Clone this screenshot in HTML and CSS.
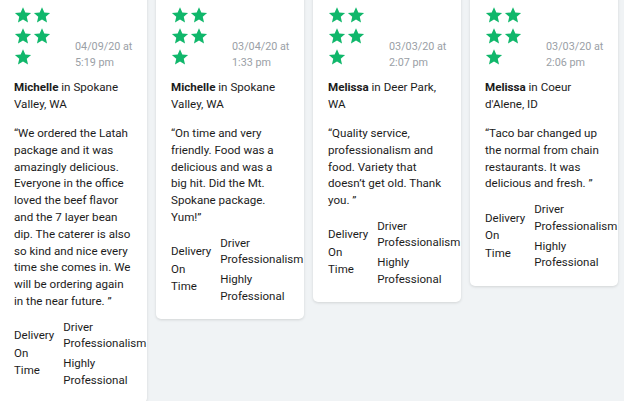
FILE: index.html
```html
<!DOCTYPE html>
<html lang="en">
<head>
<meta charset="utf-8">
<title>Reviews</title>
<link rel="stylesheet" href="styles.css">
</head>
<body>
<svg width="0" height="0" class="defs" aria-hidden="true">
  <defs>
    <path id="star" d="M12 1.5l3.1 7.1 7.7.7-5.8 5.1 1.7 7.6L12 18.1 5.3 22l1.7-7.6L1.2 9.3l7.7-.7z"/>
  </defs>
</svg>
<div class="cards">

  <article class="card">
    <div class="head">
      <div class="stars">
        <svg class="star" viewBox="0 0 24 24"><use href="#star"/></svg>
        <svg class="star" viewBox="0 0 24 24"><use href="#star"/></svg>
        <svg class="star" viewBox="0 0 24 24"><use href="#star"/></svg>
        <svg class="star" viewBox="0 0 24 24"><use href="#star"/></svg>
        <svg class="star" viewBox="0 0 24 24"><use href="#star"/></svg>
      </div>
      <div class="date">04/09/20 at<br>5:19 pm</div>
    </div>
    <p class="who"><b>Michelle</b> in Spokane Valley, WA</p>
    <p class="quote">“We ordered the Latah package and it was amazingly delicious. Everyone in the office loved the beef flavor and the 7 layer bean dip. The caterer is also so kind and nice every time she comes in. We will be ordering again in the near future. ”</p>
    <div class="tags">
      <div class="tag-left">Delivery On Time</div>
      <div class="tag-right">
        <div>Driver Professionalism</div>
        <div>Highly Professional</div>
      </div>
    </div>
  </article>

  <article class="card">
    <div class="head">
      <div class="stars">
        <svg class="star" viewBox="0 0 24 24"><use href="#star"/></svg>
        <svg class="star" viewBox="0 0 24 24"><use href="#star"/></svg>
        <svg class="star" viewBox="0 0 24 24"><use href="#star"/></svg>
        <svg class="star" viewBox="0 0 24 24"><use href="#star"/></svg>
        <svg class="star" viewBox="0 0 24 24"><use href="#star"/></svg>
      </div>
      <div class="date">03/04/20 at<br>1:33 pm</div>
    </div>
    <p class="who"><b>Michelle</b> in Spokane Valley, WA</p>
    <p class="quote">“On time and very friendly. Food was a delicious and was a big hit. Did the Mt. Spokane package. Yum!”</p>
    <div class="tags">
      <div class="tag-left">Delivery On Time</div>
      <div class="tag-right">
        <div>Driver Professionalism</div>
        <div>Highly Professional</div>
      </div>
    </div>
  </article>

  <article class="card">
    <div class="head">
      <div class="stars">
        <svg class="star" viewBox="0 0 24 24"><use href="#star"/></svg>
        <svg class="star" viewBox="0 0 24 24"><use href="#star"/></svg>
        <svg class="star" viewBox="0 0 24 24"><use href="#star"/></svg>
        <svg class="star" viewBox="0 0 24 24"><use href="#star"/></svg>
        <svg class="star" viewBox="0 0 24 24"><use href="#star"/></svg>
      </div>
      <div class="date">03/03/20 at<br>2:07 pm</div>
    </div>
    <p class="who"><b>Melissa</b> in Deer Park, WA</p>
    <p class="quote">“Quality service, professionalism and food. Variety that doesn’t get old. Thank you. ”</p>
    <div class="tags">
      <div class="tag-left">Delivery On Time</div>
      <div class="tag-right">
        <div>Driver Professionalism</div>
        <div>Highly Professional</div>
      </div>
    </div>
  </article>

  <article class="card">
    <div class="head">
      <div class="stars">
        <svg class="star" viewBox="0 0 24 24"><use href="#star"/></svg>
        <svg class="star" viewBox="0 0 24 24"><use href="#star"/></svg>
        <svg class="star" viewBox="0 0 24 24"><use href="#star"/></svg>
        <svg class="star" viewBox="0 0 24 24"><use href="#star"/></svg>
        <svg class="star" viewBox="0 0 24 24"><use href="#star"/></svg>
      </div>
      <div class="date">03/03/20 at<br>2:06 pm</div>
    </div>
    <p class="who"><b>Melissa</b> in Coeur d'Alene, ID</p>
    <p class="quote">“Taco bar changed up the normal from chain restaurants. It was delicious and fresh. ”</p>
    <div class="tags">
      <div class="tag-left">Delivery On Time</div>
      <div class="tag-right">
        <div>Driver Professionalism</div>
        <div>Highly Professional</div>
      </div>
    </div>
  </article>

</div>
</body>
</html>
```
FILE: styles.css
```css
html, body {
  margin: 0;
  padding: 0;
}
body {
  background: #f0f3f5;
  font-family: Roboto, "Liberation Sans", sans-serif;
  font-size: 11.6px;
  color: #1c1c1c;
  overflow: hidden;
  height: 401px;
}
.defs {
  position: absolute;
  width: 0;
  height: 0;
}
.cards {
  display: flex;
  align-items: flex-start;
  gap: 9px;
  margin-left: -1px;
  margin-top: -9px;
}
.card {
  flex: 0 0 148px;
  width: 148px;
  min-width: 0;
  box-sizing: border-box;
  background: #fff;
  border-radius: 5px;
  box-shadow: 0 1px 3px rgba(0, 0, 0, 0.13);
  padding: 15px 13px 15px 15px;
}
.head {
  display: flex;
  align-items: flex-end;
}
.stars {
  width: 40px;
  display: flex;
  flex-wrap: wrap;
}
.star {
  width: 18px;
  height: 18px;
  margin: 0 1px 3px 0;
  fill: #10b76b;
}
.date {
  margin-left: 21px;
  margin-bottom: -2px;
  font-size: 10.8px;
  line-height: 16px;
  color: #9aa0a6;
}
.who {
  margin: 10px 0 0;
  line-height: 16.5px;
}
.quote {
  margin: 13px 0 0;
  line-height: 16.8px;
}
.tags {
  display: flex;
  align-items: center;
  margin-top: 9px;
  font-size: 11.5px;
}
.tag-left {
  width: min-content;
  flex-shrink: 0;
  line-height: 17.5px;
}
.tag-right {
  width: min-content;
  flex-shrink: 0;
  margin-left: 9px;
  display: flex;
  flex-direction: column;
  gap: 3.5px;
  line-height: 16.5px;
}
```
